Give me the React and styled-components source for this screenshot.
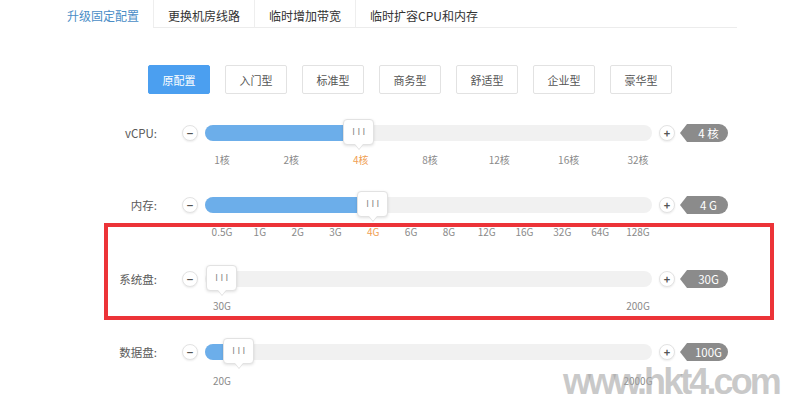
import React from 'react';
import styled, { createGlobalStyle } from 'styled-components';

const GlobalStyle = createGlobalStyle`
  html, body {
    margin: 0;
    padding: 0;
    background: #fff;
  }
  body {
    font-family: "Noto Sans CJK SC", "Noto Sans", sans-serif;
    color: #333;
  }
`

const Page = styled.div`
  position: relative;
  width: 795px;
  height: 399px;
  overflow: hidden;
`

const TabBar = styled.div`
  display: flex;
  margin-left: 52px;
  width: 685px;
`

const Tab = styled.div`
  height: 28px;
  box-sizing: border-box;
  padding: 3px 14px 0;
  display: flex;
  align-items: center;
  justify-content: center;
  min-width: 101px;
  font-size: 12px;
  color: ${p => (p.$active ? '#4a8dc6' : '#333')};
  border-bottom: 1px solid ${p => (p.$active ? 'transparent' : '#ececec')};
  border-left: 1px solid ${p => (p.$first ? 'transparent' : '#eee')};
`

const TabFill = styled.div`
  flex: 1;
  border-bottom: 1px solid #ececec;
`

const PresetRow = styled.div`
  display: flex;
  gap: 15px;
  margin: 37px 0 0 148px;
`

const PresetButton = styled.div`
  width: 62px;
  height: 29px;
  box-sizing: border-box;
  display: flex;
  align-items: center;
  justify-content: center;
  font-size: 11px;
  border-radius: 2px;
  color: ${p => (p.$active ? '#fff' : '#555')};
  background: ${p => (p.$active ? '#4b9ff0' : '#fff')};
  border: 1px solid ${p => (p.$active ? '#4b9ff0' : '#e2e2e2')};
`

const SliderBlock = styled.div`
  margin-top: ${p => p.$top}px;
`

const SliderRow = styled.div`
  display: flex;
  align-items: center;
  height: 28px;
`

const Label = styled.div`
  width: 157px;
  text-align: right;
  font-size: 11.5px;
  color: #5a5a5a;
`

const RoundButton = styled.div`
  width: 16px;
  height: 16px;
  box-sizing: border-box;
  border-radius: 50%;
  border: 1px solid #e3e3e3;
  box-shadow: 0 1px 2px rgba(0, 0, 0, 0.08);
  background: #fff;
  display: flex;
  align-items: center;
  justify-content: center;
  font-size: 11px;
  font-weight: bold;
  color: #555;
  margin-left: ${p => p.$gap}px;
  line-height: 1;
`

const Track = styled.div`
  position: relative;
  margin-left: 7px;
  width: 447px;
  height: 16px;
  border-radius: 8px;
  background: #f1f1f1;
`

const Fill = styled.div`
  height: 100%;
  border-radius: 8px;
  background: #6caeea;
`

const Handle = styled.div`
  position: absolute;
  top: -6px;
  width: 31px;
  height: 26px;
  box-sizing: border-box;
  margin-left: -15px;
  background: #fff;
  border: 1px solid #e2e2e2;
  border-radius: 4px;
  box-shadow: 0 1px 3px rgba(0, 0, 0, 0.12);
  display: flex;
  align-items: center;
  justify-content: center;
  font-family: "DejaVu Sans", sans-serif;
  font-size: 9px;
  letter-spacing: 2.5px;
  color: #888;
  padding-left: 3px;

  &::after {
    content: '';
    position: absolute;
    bottom: -5px;
    left: 50%;
    margin-left: -4px;
    border-left: 4px solid transparent;
    border-right: 4px solid transparent;
    border-top: 5px solid #fff;
    filter: drop-shadow(0 1px 0 #ddd);
  }
`

const Tag = styled.div`
  position: relative;
  margin-left: 12px;
  width: 41px;
  height: 18px;
  background: #8b8b8b;
  border-radius: 0 9px 9px 0;
  color: #fff;
  font-size: 11.5px;
  display: flex;
  align-items: center;
  justify-content: center;
  padding-left: 2px;
  box-sizing: border-box;

  &::before {
    content: '';
    position: absolute;
    left: -7px;
    top: 0;
    border-top: 9px solid transparent;
    border-bottom: 9px solid transparent;
    border-right: 7px solid #8b8b8b;
  }
`

const TickRow = styled.div`
  display: flex;
  justify-content: space-between;
  margin: ${p => p.$gap}px 0 0 222px;
  width: 416px;
  height: 14px;
`

const Tick = styled.div`
  width: 0;
  display: flex;
  justify-content: center;
  white-space: nowrap;
  font-size: 10px;
  line-height: 14px;
  color: ${p => (p.$active ? '#f0a052' : '#8a8a8a')};
`

const Highlight = styled.div`
  position: absolute;
  left: 104px;
  top: 223px;
  width: 670px;
  height: 97px;
  box-sizing: border-box;
  border: 4px solid #ec3338;
  pointer-events: none;
`

const Watermark = styled.div`
  position: absolute;
  left: 563px;
  top: 367px;
  font-family: "Liberation Sans", Arial, sans-serif;
  font-weight: bold;
  font-size: 36px;
  letter-spacing: -2.9px;
  color: rgba(165, 165, 165, 0.6);
  line-height: 30px;
`

const tabs = ['升级固定配置', '更换机房线路', '临时增加带宽', '临时扩容CPU和内存']
const presets = ['原配置', '入门型', '标准型', '商务型', '舒适型', '企业型', '豪华型']

const sliders = [
  { label: 'vCPU:', pos: 153, fill: 150, value: '4 核', top: 25, tickGap: 6, ticks: ['1核', '2核', '4核', '8核', '12核', '16核', '32核'], active: '4核' },
  { label: '内存:', pos: 167, fill: 165, value: '4 G', top: 24, tickGap: 6, ticks: ['0.5G', '1G', '2G', '3G', '4G', '6G', '8G', '12G', '16G', '32G', '64G', '128G'], active: '4G' },
  { label: '系统盘:', pos: 16, fill: 0, value: '30G', top: 26, tickGap: 6, ticks: ['30G', '200G'] },
  { label: '数据盘:', pos: 33, fill: 26, value: '100G', top: 25, tickGap: 8, ticks: ['20G', '2000G'] },
]

const Slider = ({ label, pos, fill, value, top, tickGap, ticks, active }) => (
  <SliderBlock $top={top}>
    <SliderRow>
      <Label>{label}</Label>
      <RoundButton $gap={25}>−</RoundButton>
      <Track>
        {fill > 0 && <Fill style={{ width: fill }} />}
        <Handle style={{ left: pos }}>III</Handle>
      </Track>
      <RoundButton $gap={7}>+</RoundButton>
      <Tag>{value}</Tag>
    </SliderRow>
    <TickRow $gap={tickGap}>
      {ticks.map(t => (
        <Tick key={t} $active={t === active}>{t}</Tick>
      ))}
    </TickRow>
  </SliderBlock>
)

const App = () => (
  <Page>
    <GlobalStyle />
    <TabBar>
      {tabs.map((t, i) => (
        <Tab key={t} $active={i === 0} $first={i === 0}>{t}</Tab>
      ))}
      <TabFill />
    </TabBar>
    <PresetRow>
      {presets.map((p, i) => (
        <PresetButton key={p} $active={i === 0}>{p}</PresetButton>
      ))}
    </PresetRow>
    {sliders.map(s => (
      <Slider key={s.label} {...s} />
    ))}
    <Highlight />
    <Watermark>www.hkt4.com</Watermark>
  </Page>
)

export default App
